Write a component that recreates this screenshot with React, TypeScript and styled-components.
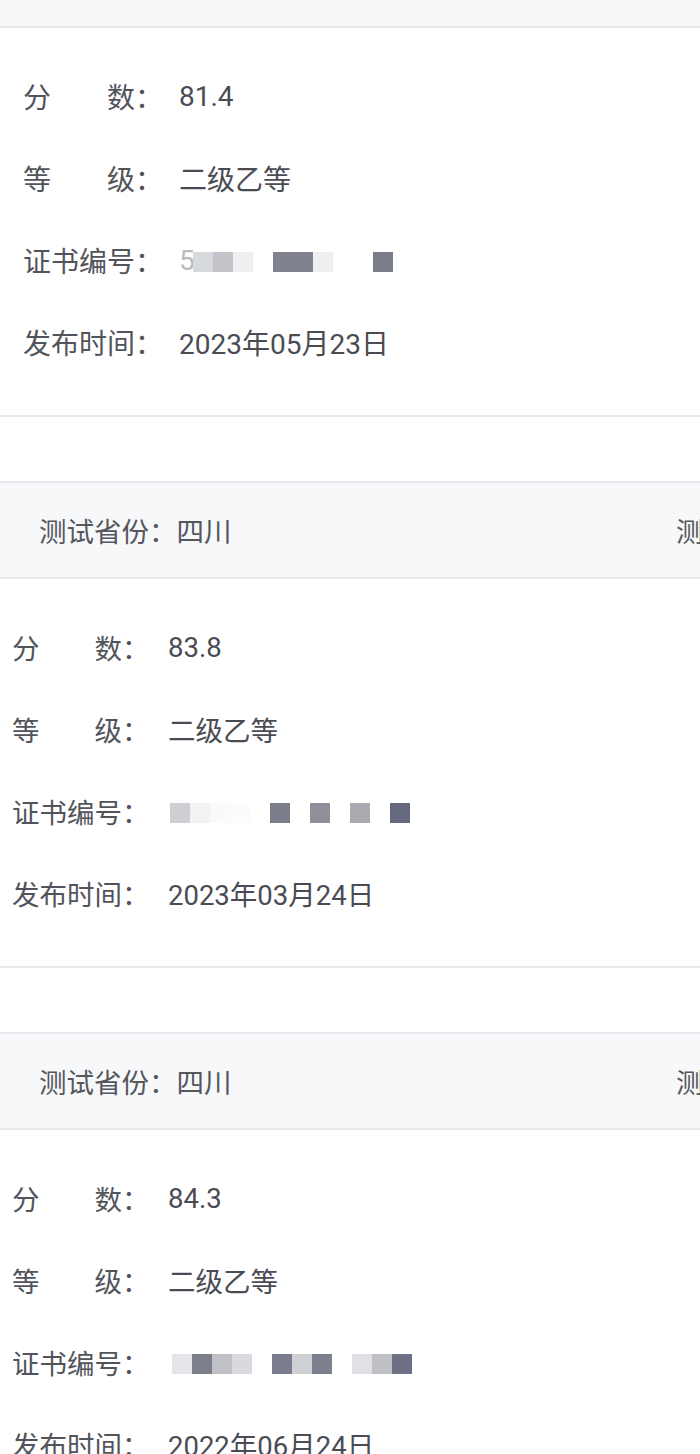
import React from 'react'
import styled, { createGlobalStyle } from 'styled-components'

const GlobalStyle = createGlobalStyle`
  html, body {
    margin: 0;
    padding: 0;
    background: #fff;
  }
  body {
    font-family: Roboto, "Noto Sans CJK SC", "Noto Sans", sans-serif;
    -webkit-font-smoothing: antialiased;
  }
`

// ============== LAYOUT ==============
const Page = styled.div`
  width: 700px;
  height: 1454px;
  overflow: hidden;
  background: #fff;
  display: flex;
  flex-direction: column;
`

const Card = styled.section`
  display: flex;
  flex-direction: column;
  margin-bottom: 64px;
  flex-shrink: 0;
`

// stub of the previous card header, cut off by the top of the screen
const HeaderStub = styled.div`
  height: 26px;
  background: #f7f8fa;
  border-bottom: 2px solid #e8e9ed;
`

const Header = styled.div`
  height: 94px;
  background: #f7f8fa;
  border-top: 2px solid #e8e9ed;
  border-bottom: 2px solid #e8e9ed;
  padding-left: 39px;
  display: grid;
  grid-template-columns: 637px auto;
  align-items: center;
  overflow: hidden;
  white-space: nowrap;
  font-size: 27.5px;
  color: #55575e;
`

const Body = styled.div<{ $indent: number; $size: number }>`
  padding: 27px 0 32px ${(p) => p.$indent}px;
  border-bottom: 2px solid #e8e9ed;
  display: flex;
  flex-direction: column;
  font-size: ${(p) => p.$size}px;
`

const Row = styled.div`
  height: 82px;
  display: flex;
  align-items: center;
  white-space: nowrap;
`

const Label = styled.span<{ $width: number }>`
  width: ${(p) => p.$width}px;
  flex-shrink: 0;
  color: #52545b;
`

const Value = styled.span`
  color: #4a4c54;
  display: flex;
  align-items: center;
`

// ============== MOSAIC (blurred certificate number) ==============
const Mosaic = styled.span<{ $offset: number }>`
  display: flex;
  margin-left: ${(p) => p.$offset}px;
  margin-top: 4px;
`

const Cell = styled.span`
  width: 20px;
  height: 20px;
  display: block;
`

const FaintDigit = styled.span`
  color: #b9bac0;
  width: 14px;
  overflow: hidden;
`

type CardData = {
  score: string
  level: string
  date: string
  mosaic: (string | null)[]
  offset: number
  digit?: string
}

const cards: CardData[] = [
  {
    score: '81.4',
    level: '二级乙等',
    date: '2023年05月23日',
    digit: '5',
    offset: 0,
    mosaic: ['#d8d9dd', '#c4c5cb', '#eeeff1', null, '#80828f', '#80828f', '#eeeff1', null, null, '#7a7c89']
  },
  {
    score: '83.8',
    level: '二级乙等',
    date: '2023年03月24日',
    offset: 2,
    mosaic: ['#cfcfd3', '#f2f2f4', '#fafafb', '#fcfcfc', null, '#7b7d8b', null, '#8f9099', null, '#a9aab0', null, '#676a7e']
  },
  {
    score: '84.3',
    level: '二级乙等',
    date: '2022年06月24日',
    offset: 4,
    mosaic: ['#e4e5e8', '#7e7f8d', '#c0c1c7', '#d9dadd', null, '#7b7d8f', '#cfd0d4', '#7f808d', null, '#e0e1e4', '#bfc0c6', '#6e7085']
  }
]

const ResultCard: React.FC<{ data: CardData; first?: boolean }> = ({ data, first }) => {
  const labelWidth = 156
  return (
    <Card>
      {first ? (
        <HeaderStub />
      ) : (
        <Header>
          <span>测试省份：四川</span>
          <span>测试时间：{data.date}</span>
        </Header>
      )}
      <Body $indent={first ? 23 : 12} $size={first ? 28 : 27.5}>
        <Row>
          <Label $width={labelWidth}>分　　数：</Label>
          <Value>{data.score}</Value>
        </Row>
        <Row>
          <Label $width={labelWidth}>等　　级：</Label>
          <Value>{data.level}</Value>
        </Row>
        <Row>
          <Label $width={labelWidth}>证书编号：</Label>
          <Value>
            {data.digit && <FaintDigit>{data.digit}</FaintDigit>}
            <Mosaic $offset={data.offset}>
              {data.mosaic.map((c, i) => (
                <Cell key={i} style={{ background: c ?? 'transparent' }} />
              ))}
            </Mosaic>
          </Value>
        </Row>
        <Row>
          <Label $width={labelWidth}>发布时间：</Label>
          <Value>{data.date}</Value>
        </Row>
      </Body>
    </Card>
  )
}

export default function App() {
  return (
    <Page>
      <GlobalStyle />
      {cards.map((c, i) => (
        <ResultCard key={i} data={c} first={i === 0} />
      ))}
    </Page>
  )
}
